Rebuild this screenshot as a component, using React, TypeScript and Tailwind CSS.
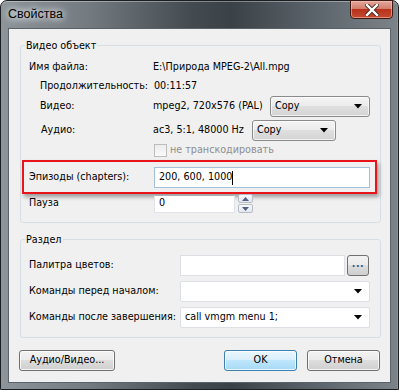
import React from "react";

const font = "font-['DejaVu_Sans_Condensed',Tahoma,'Liberation_Sans',sans-serif]";

function Arrow() {
  return (
    <svg width="8" height="5" viewBox="0 0 8 5" className="shrink-0">
      <polygon points="0,0 8,0 4,4.5" fill="#000" />
    </svg>
  );
}

function Combo({ text, w }: { text: string; w: string }) {
  return (
    <div
      className={`${w} h-[21px] flex items-center justify-between pl-[4px] pr-[7px] rounded-[3px] border border-[#8a8a8a] bg-[linear-gradient(#f4f4f4,#ececec_45%,#dfdfdf_50%,#d3d3d3)] shadow-[inset_0_0_0_1px_rgba(255,255,255,0.7)]`}
    >
      <span>{text}</span>
      <Arrow />
    </div>
  );
}

function EditCombo({ text }: { text?: string }) {
  return (
    <div className="w-[190px] h-[21px] flex items-center justify-between pl-[4px] pr-[7px] rounded-[2px] border border-[#dcdfe3] bg-white">
      <span>{text}</span>
      <Arrow />
    </div>
  );
}

function Button({
  children,
  w,
  primary,
}: {
  children: React.ReactNode;
  w: string;
  primary?: boolean;
}) {
  return (
    <div
      className={`${w} h-[21px] flex items-center justify-center rounded-[3px] border ${
        primary
          ? "border-[#3c7fb1] bg-[linear-gradient(#eaf6fd,#d9f0fc_45%,#bee6fd_50%,#a7d9f5)]"
          : "border-[#707070] bg-[linear-gradient(#f2f2f2,#ebebeb_45%,#dddddd_50%,#cfcfcf)]"
      } shadow-[inset_0_0_0_1px_rgba(255,255,255,0.75)]`}
    >
      {children}
    </div>
  );
}

function SpinBtn({ up }: { up?: boolean }) {
  return (
    <div className="w-[15px] h-[9px] flex items-center justify-center rounded-[2px] border border-[#b6bdc7] bg-[linear-gradient(#f7f8fa,#e4e8ec)]">
      <svg width="7" height="4" viewBox="0 0 7 4">
        <polygon
          points={up ? "0,4 7,4 3.5,0" : "0,0 7,0 3.5,4"}
          fill="#4f5f86"
        />
      </svg>
    </div>
  );
}

export default function App() {
  return (
    <div className={`${font} text-[10.7px] text-black leading-none whitespace-nowrap`}>
      <div className="relative w-[399px] h-[390px] border border-[#1b1f22] rounded-t-[7px] bg-[linear-gradient(90deg,#8d959b,#737b81_22%,#434a50_48%,#3a4147_58%,#5d656c_80%,#7c848a)] shadow-[inset_0_1px_0_rgba(255,255,255,0.35),inset_-4px_-3px_0_-3px_#3aaed6] flex flex-col px-[7px] pb-[6px]">
        {/* title bar */}
        <div className="h-[27px] flex items-center pl-[0px]">
          <span className="font-['Liberation_Sans',Arial,sans-serif] text-[12.5px] text-black [text-shadow:0_0_6px_#fff,0_0_10px_rgba(255,255,255,0.9)]">
            Свойства
          </span>
        </div>
        {/* close button */}
        <div className="absolute top-[-1px] right-[5px] w-[43px] h-[19px] rounded-b-[4px] border border-[#3d1b14] bg-[linear-gradient(#e2a89c,#d47d6c_45%,#b8321c_50%,#c44a2e)] shadow-[inset_0_0_0_1px_rgba(255,200,190,0.55)] flex items-center justify-center">
          <svg width="14" height="12" viewBox="0 0 14 12">
            <path
              d="M2 1 L12 11 M12 1 L2 11"
              stroke="#4a2a24"
              strokeWidth="4.2"
              strokeLinecap="square"
            />
            <path
              d="M2 1 L12 11 M12 1 L2 11"
              stroke="#fff"
              strokeWidth="2.4"
              strokeLinecap="square"
            />
          </svg>
        </div>

        {/* client area */}
        <div className="w-[383px] h-[355px] border border-[#5b6268] bg-[#f0f0f0] flex flex-col">
          {/* Group 1 */}
          <div className="relative ml-[11px] mt-[16px] w-[361px] rounded-[3px] border border-[#d5dfe5] flex flex-col pt-[12px] pb-[9px]">
            <span className="absolute -top-[7px] left-[4px] px-[1px] bg-[#f0f0f0] leading-[13px]">
              Видео объект
            </span>
            <div className="h-[18px] flex items-center">
              <span className="w-[132px] pl-[8px]">Имя файла:</span>
              <span>E:\Природа MPEG-2\All.mpg</span>
            </div>
            <div className="h-[18px] mt-[1px] flex items-center">
              <span className="w-[132px] pl-[19px]">Продолжительность:</span>
              <span className="pl-[1px]">00:11:57</span>
            </div>
            <div className="h-[21px] mt-[1px] flex items-center">
              <span className="w-[132px] pl-[19px]">Видео:</span>
              <span className="w-[117px]">mpeg2, 720x576 (PAL)</span>
              <Combo text="Copy" w="w-[100px]" />
            </div>
            <div className="h-[21px] mt-[3px] flex items-center">
              <span className="w-[132px] pl-[20px]">Аудио:</span>
              <span className="w-[99px]">ac3, 5:1, 48000 Hz</span>
              <Combo text="Copy" w="w-[84px]" />
            </div>
            <div className="h-[14px] mt-[2px] flex items-center pl-[133px]">
              <span className="w-[13px] h-[13px] border border-[#bdbdbd] bg-[linear-gradient(#ececec,#fafafa)]" />
              <span className="ml-[3px] text-[#8e8e8e]">не транскодировать</span>
            </div>
            <div className="mt-[3px] ml-[1px] w-[355px] h-[34px] border-2 border-[#e8141a] shadow-[2px_3px_4px_rgba(0,0,0,0.35)] flex items-start pt-[5px]">
              <span className="w-[130px] pl-[5px] h-[21px] flex items-center">
                Эпизоды (chapters):
              </span>
              <div className="w-[216px] h-[21px] border border-[#a3c0da] bg-white flex items-center pl-[4px]">
                <span>200, 600, 1000</span>
                <span className="w-px h-[14px] bg-black" />
              </div>
            </div>
            <div className="h-[19px] flex items-center">
              <span className="w-[133px] pl-[8px]">Пауза</span>
              <div className="w-[81px] h-[18px] border border-[#e2e3ea] border-t-[#abadb3] bg-white flex items-center pl-[4px]">
                0
              </div>
              <div className="ml-[3px] flex flex-col gap-px">
                <SpinBtn up />
                <SpinBtn />
              </div>
            </div>
          </div>

          {/* Group 2 */}
          <div className="relative ml-[11px] mt-[16px] w-[361px] rounded-[3px] border border-[#d5dfe5] flex flex-col pt-[15px] pb-[9px] gap-[5px]">
            <span className="absolute -top-[7px] left-[4px] px-[1px] bg-[#f0f0f0] leading-[13px]">
              Раздел
            </span>
            <div className="h-[21px] flex items-center">
              <span className="w-[159px] pl-[8px]">Палитра цветов:</span>
              <div className="w-[165px] h-[21px] border border-[#dcdfe3] bg-white" />
              <div className="ml-[2px] w-[22px] h-[21px] rounded-[3px] border border-[#707070] bg-[linear-gradient(#f2f2f2,#ebebeb_45%,#dddddd_50%,#cfcfcf)] flex items-center justify-center font-bold text-[#3a5a8a] tracking-[0.5px] pb-[2px]">
                ...
              </div>
            </div>
            <div className="h-[21px] flex items-center">
              <span className="w-[159px] pl-[8px]">Команды перед началом:</span>
              <EditCombo />
            </div>
            <div className="h-[21px] flex items-center">
              <span className="w-[159px] pl-[8px]">Команды после завершения:</span>
              <EditCombo text="call vmgm menu 1;" />
            </div>
          </div>

          {/* buttons */}
          <div className="mt-[12px] flex items-center pl-[10px] pr-[10px]">
            <Button w="w-[96px]">Аудио/Видео...</Button>
            <div className="ml-auto flex gap-[10px]">
              <Button w="w-[73px]" primary>
                OK
              </Button>
              <Button w="w-[73px]">Отмена</Button>
            </div>
          </div>
        </div>
      </div>
    </div>
  );
}
